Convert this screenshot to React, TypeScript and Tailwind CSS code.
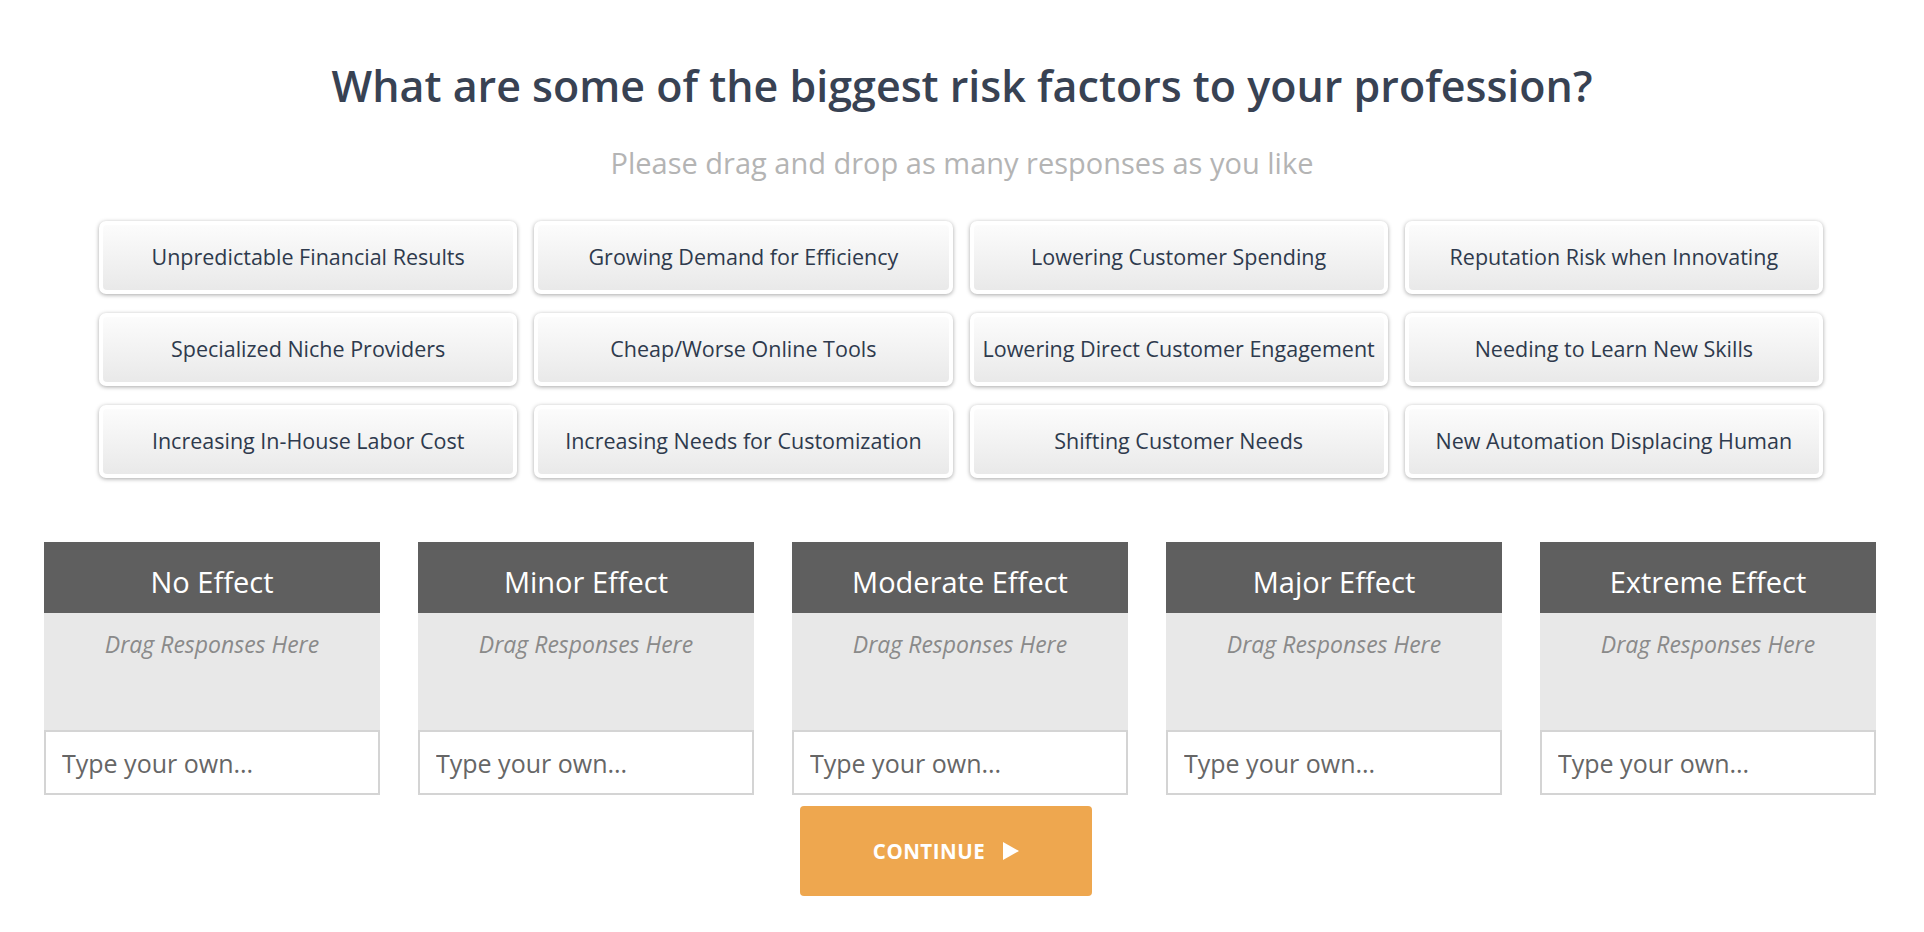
import React from 'react';

const responses = [
  'Unpredictable Financial Results',
  'Growing Demand for Efficiency',
  'Lowering Customer Spending',
  'Reputation Risk when Innovating',
  'Specialized Niche Providers',
  'Cheap/Worse Online Tools',
  'Lowering Direct Customer Engagement',
  'Needing to Learn New Skills',
  'Increasing In-House Labor Cost',
  'Increasing Needs for Customization',
  'Shifting Customer Needs',
  'New Automation Displacing Human',
];

const effects = ['No Effect', 'Minor Effect', 'Moderate Effect', 'Major Effect', 'Extreme Effect'];

const Tile: React.FC<{ label: string }> = ({ label }) => (
  <div className="h-[73px] rounded-[7px] bg-white p-[4px] shadow-[0_1px_4px_rgba(0,0,0,0.35)] cursor-move">
    <div className="flex h-full items-center justify-center rounded-[4px] bg-gradient-to-b from-[#fcfcfc] to-[#e9e9e9] text-[21.5px] text-[#2e3a4d] whitespace-nowrap">
      {label}
    </div>
  </div>
);

const Bucket: React.FC<{ title: string }> = ({ title }) => (
  <div className="flex w-[336px] flex-col">
    <div className="flex h-[71px] items-center justify-center bg-[#5f5f5f] pt-[8px] text-[29px] text-white">
      {title}
    </div>
    <div className="h-[117px] bg-[#e8e8e8] pt-[14px] text-center text-[23px] italic text-[#8a8a8a]">
      Drag Responses Here
    </div>
    <input
      type="text"
      placeholder="Type your own..."
      className="h-[65px] w-full border-2 border-[#d4d4d4] bg-white px-[16px] text-[25px] text-[#555] outline-none placeholder:text-[#666]"
    />
  </div>
);

export default function App() {
  return (
    <main className="min-h-screen bg-white font-['Open_Sans',sans-serif]">
      <h1 className="pt-[61px] text-center text-[43px] font-semibold leading-[50px] text-[#384253]">
        What are some of the biggest risk factors to your profession?
      </h1>
      <p className="mt-[34px] text-center text-[29px] leading-[36px] text-[#b4b4b4]">
        Please drag and drop as many responses as you like
      </p>

      <div className="mx-auto mt-[40px] grid w-[1724px] -translate-x-[1px] grid-cols-4 gap-x-[17px] gap-y-[19px]">
        {responses.map((r) => (
          <Tile key={r} label={r} />
        ))}
      </div>

      <div className="ml-[44px] mt-[64px] flex w-[1832px] justify-between">
        {effects.map((e) => (
          <Bucket key={e} title={e} />
        ))}
      </div>

      <div className="mt-[11px] flex justify-center pr-[32px]">
        <button className="flex h-[90px] w-[292px] items-center justify-center gap-[18px] rounded-[4px] bg-[#eea74f] text-[20.5px] font-bold tracking-[0.5px] text-white">
          CONTINUE
          <svg width="16" height="18" viewBox="0 0 16 18" fill="white">
            <path d="M0 0 L16 9 L0 18 Z" />
          </svg>
        </button>
      </div>
    </main>
  );
}
